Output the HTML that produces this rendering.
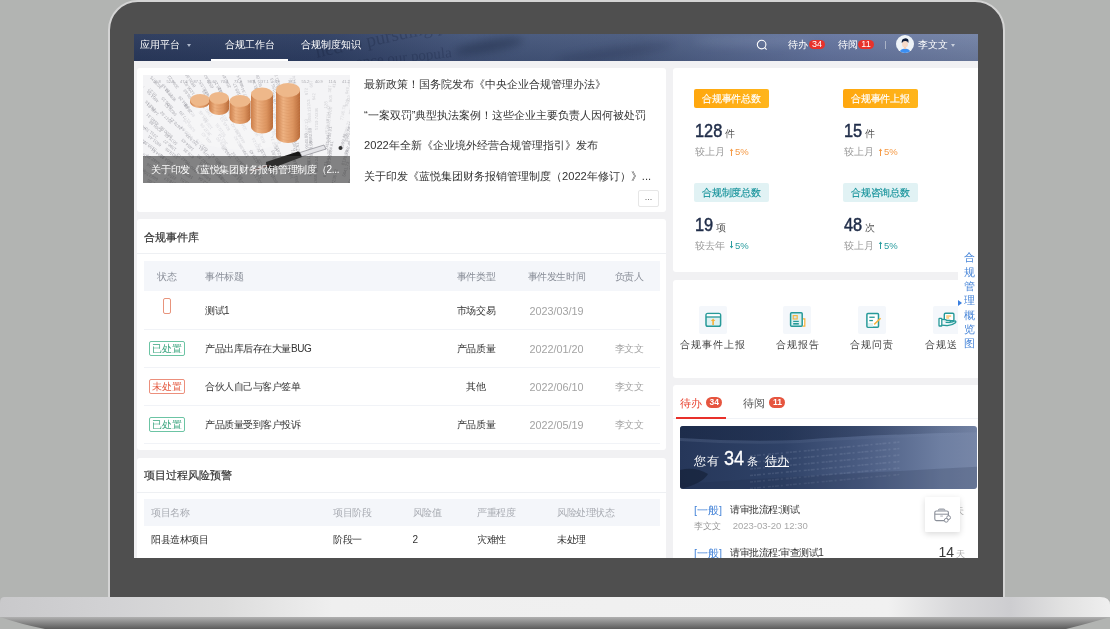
<!DOCTYPE html>
<html><head><meta charset="utf-8">
<style>
*{margin:0;padding:0;box-sizing:border-box}
html,body{width:1110px;height:629px;overflow:hidden;background:#b2b4b2;font-family:"Liberation Sans",sans-serif;}
.abs{position:absolute}
#bezel{position:absolute;left:108px;top:0;width:897px;height:640px;background:#4f4f4f;border:2px solid #d4d4d4;border-radius:30px;}
#screen{position:absolute;left:134px;top:34px;width:844px;height:524px;background:#f1f1f3;overflow:hidden;will-change:transform;}
#base{position:absolute;left:0;top:597px;width:1110px;height:32px;}
#nav{position:absolute;left:0;top:0;width:844px;height:27px;overflow:hidden;background:linear-gradient(90deg,#2b3a5c 0%,#2f3f63 22%,#44557a 40%,#4a5b7f 60%,#6676a0 82%,#7483a6 100%);color:#fff;font-size:10px;}
.nt{top:0.6px;line-height:20px;font-size:10px;color:#fff;white-space:nowrap}
.badge{height:9px;border-radius:5px;background:#e8322b;color:#fff;font-size:9px;line-height:9px;text-align:center}
.news{font-size:11.15px;line-height:20px;color:#333;white-space:nowrap}
.ttl{font-size:11px;line-height:20px;-webkit-text-stroke:0.2px #333;color:#333;white-space:nowrap}
.th{font-size:10px;letter-spacing:-0.45px;line-height:20px;color:#8a8f99;white-space:nowrap}
.th2{font-size:10px;letter-spacing:-0.45px;line-height:20px;color:#a9acb3;white-space:nowrap}
.td{font-size:10px;letter-spacing:-0.45px;line-height:20px;color:#333;white-space:nowrap}
.tag{width:36px;height:15px;border:1px solid;border-radius:2px;font-size:10px;line-height:13px;text-align:center;white-space:nowrap}
.stag{width:75px;height:19px;border-radius:2px;font-size:10px;letter-spacing:-0.35px;text-indent:-0.35px;line-height:19px;text-align:center;white-space:nowrap;-webkit-text-stroke:0.15px currentColor}
.num{font-size:19px;line-height:20px;color:#1f2c48;white-space:nowrap;-webkit-text-stroke:0.5px #1f2c48;transform:scaleX(.86);transform-origin:0 0}
.unit{font-size:10px;line-height:16px;color:#555;white-space:nowrap}
.cmp{font-size:10px;line-height:16px;color:#9a9a9a;white-space:nowrap}
.pct{font-size:9.5px;line-height:16px;white-space:nowrap}
.lab{font-size:10px;line-height:16px;color:#444;letter-spacing:1px;white-space:nowrap}
.tb{width:16px;height:11px;border-radius:6px;background:#e6553f;color:#fff;font-size:8.5px;line-height:11px;text-align:center;font-weight:bold}
.card{position:absolute;background:#fff;border-radius:3px;}
</style></head><body>
<div id="bezel"></div>
<div id="screen">
  <div id="nav">
    <div class="abs" style="left:0;top:0;width:844px;height:27px;background:linear-gradient(180deg,rgba(255,255,255,0.03) 0%,rgba(10,20,45,0.12) 100%)"></div>
    <div class="abs" style="left:320px;top:6px;width:70px;height:12px;border-radius:50%;background:rgba(15,25,50,.35);filter:blur(4px);transform:rotate(-10deg)"></div>
    <div class="abs" style="left:420px;top:14px;width:120px;height:10px;border-radius:50%;background:rgba(15,25,50,.22);filter:blur(5px);transform:rotate(-8deg)"></div>
    <div class="abs" style="left:560px;top:2px;width:120px;height:10px;border-radius:50%;background:rgba(200,210,230,.12);filter:blur(5px)"></div>
    <div class="abs" style="left:180px;top:-8px;font-family:'Liberation Serif',serif;font-size:19px;color:rgba(15,25,50,.24);transform:rotate(-12deg);white-space:nowrap">ned to pursuing po</div>
    <div class="abs" style="left:222px;top:15px;font-family:'Liberation Serif',serif;font-size:15px;color:rgba(15,25,50,.22);transform:rotate(-6deg);white-space:nowrap">ance our popula</div>
    <div class="abs nt" style="left:6px">应用平台</div>
    <div class="abs" style="left:53px;top:9.5px;width:0;height:0;border-left:2.5px solid transparent;border-right:2.5px solid transparent;border-top:3px solid #aeb8cc"></div>
    <div class="abs nt" style="left:91px">合规工作台</div>
    <div class="abs" style="left:77px;top:25px;width:77px;height:2px;background:#fff"></div>
    <div class="abs nt" style="left:167px">合规制度知识</div>
    <svg class="abs" style="left:622px;top:5px" width="12" height="12" viewBox="0 0 12 12"><circle cx="5.6" cy="5.6" r="4.3" fill="none" stroke="#fff" stroke-width="1.1"/><path d="M8.7 8.7 L10.6 10.6" stroke="#fff" stroke-width="1.1"/></svg>
    <div class="abs nt" style="left:654px">待办</div>
    <div class="abs badge" style="left:675px;top:6px;width:16px">34</div>
    <div class="abs nt" style="left:704px">待阅</div>
    <div class="abs badge" style="left:724px;top:6px;width:16px">11</div>
    <div class="abs" style="left:751px;top:7px;width:1px;height:8px;background:#aab3c6"></div>
    <svg class="abs" style="left:762px;top:1px" width="18" height="18" viewBox="0 0 18 18"><defs><clipPath id="av"><circle cx="9" cy="9" r="9"/></clipPath></defs><g clip-path="url(#av)"><rect width="18" height="18" fill="#eef3f8"/><path d="M3 18 Q4 14 9 13.6 Q14 14 15 18 Z" fill="#3b8ef2"/><rect x="8" y="11.5" width="2" height="2.5" fill="#f3cdb4"/><ellipse cx="9" cy="9" rx="3" ry="3.6" fill="#f7dac8"/><path d="M5.8 8.2 Q5.2 4 8.6 3.6 Q10.2 2.6 11.2 3.8 Q13 4.4 12.3 8 Q11.8 6 9.2 6.1 Q6.8 6 5.8 8.2 Z" fill="#0f1d3a"/></g></svg>
    <div class="abs nt" style="left:784px">李文文</div>
    <div class="abs" style="left:816.5px;top:9.5px;width:0;height:0;border-left:2.5px solid transparent;border-right:2.5px solid transparent;border-top:3px solid #c8cfdc"></div>
  </div>
  <div class="card" style="left:3px;top:34px;width:529px;height:144px">
    <div class="abs" style="left:6px;top:7px;width:207px;height:108px;overflow:hidden;background:#f4f4f6">
      <svg width="207" height="108" viewBox="0 0 207 108" style="position:absolute;left:0;top:0">
        <defs><linearGradient id="cg" x1="0" x2="1"><stop offset="0" stop-color="#cc7d48"/><stop offset="0.3" stop-color="#eeb282"/><stop offset="0.7" stop-color="#dd9560"/><stop offset="1" stop-color="#b86a38"/></linearGradient></defs>
        <g font-family="Liberation Sans"><text x="1.9" y="12.2" transform="rotate(-134 1.9 12.2)" font-size="4.3" fill="#7e7e86" opacity="0.62">7639.67</text><text x="19.2" y="12.3" transform="rotate(-131 19.2 12.3)" font-size="4.3" fill="#7e7e86" opacity="0.62">3035.75</text><text x="36.1" y="12.3" transform="rotate(-128 36.1 12.3)" font-size="4.3" fill="#7e7e86" opacity="0.62">3060.22</text><text x="52.9" y="10.9" transform="rotate(-124 52.9 10.9)" font-size="4.3" fill="#7e7e86" opacity="0.62">8835.98</text><text x="71.0" y="12.3" transform="rotate(-120 71.0 12.3)" font-size="4.3" fill="#7e7e86" opacity="0.62">6500.67</text><text x="88.1" y="12.3" transform="rotate(-116 88.1 12.3)" font-size="4.3" fill="#7e7e86" opacity="0.62">2590.89</text><text x="101.3" y="12.1" transform="rotate(-113 101.3 12.1)" font-size="4.3" fill="#7e7e86" opacity="0.62">985.14</text><text x="119.3" y="11.2" transform="rotate(-107 119.3 11.2)" font-size="4.3" fill="#7e7e86" opacity="0.62">502.69</text><text x="137.2" y="12.3" transform="rotate(-102 137.2 12.3)" font-size="4.3" fill="#7e7e86" opacity="0.62">3210.76</text><text x="153.6" y="11.4" transform="rotate(-97 153.6 11.4)" font-size="4.3" fill="#7e7e86" opacity="0.3">85.94</text><text x="169.7" y="12.5" transform="rotate(-92 169.7 12.5)" font-size="4.3" fill="#7e7e86" opacity="0.3">667</text><text x="192.2" y="13.0" transform="rotate(-84 192.2 13.0)" font-size="4.3" fill="#7e7e86" opacity="0.3">417</text><text x="207.7" y="12.0" transform="rotate(-80 207.7 12.0)" font-size="4.3" fill="#7e7e86" opacity="0.3">497</text><text x="-1.6" y="17.8" transform="rotate(-136 -1.6 17.8)" font-size="4.3" fill="#7e7e86" opacity="0.62">1776.47</text><text x="14.3" y="20.4" transform="rotate(-133 14.3 20.4)" font-size="4.3" fill="#7e7e86" opacity="0.62">18.37</text><text x="30.3" y="20.2" transform="rotate(-130 30.3 20.2)" font-size="4.3" fill="#7e7e86" opacity="0.62">7710.58</text><text x="51.9" y="18.7" transform="rotate(-126 51.9 18.7)" font-size="4.3" fill="#7e7e86" opacity="0.62">1206.82</text><text x="66.8" y="19.8" transform="rotate(-122 66.8 19.8)" font-size="4.3" fill="#7e7e86" opacity="0.62">4430.53</text><text x="80.5" y="18.5" transform="rotate(-119 80.5 18.5)" font-size="4.3" fill="#7e7e86" opacity="0.62">6728.25</text><text x="97.8" y="19.6" transform="rotate(-114 97.8 19.6)" font-size="4.3" fill="#7e7e86" opacity="0.62">189.17</text><text x="116.8" y="19.0" transform="rotate(-109 116.8 19.0)" font-size="4.3" fill="#7e7e86" opacity="0.62">9173.34</text><text x="133.7" y="18.1" transform="rotate(-104 133.7 18.1)" font-size="4.3" fill="#7e7e86" opacity="0.62">2155.63</text><text x="151.9" y="17.8" transform="rotate(-98 151.9 17.8)" font-size="4.3" fill="#7e7e86" opacity="0.3">6903.37</text><text x="165.0" y="20.1" transform="rotate(-93 165.0 20.1)" font-size="4.3" fill="#7e7e86" opacity="0.3">972</text><text x="188.0" y="17.6" transform="rotate(-86 188.0 17.6)" font-size="4.3" fill="#7e7e86" opacity="0.3">307</text><text x="205.0" y="19.3" transform="rotate(-80 205.0 19.3)" font-size="4.3" fill="#7e7e86" opacity="0.3">946</text><text x="-0.5" y="24.9" transform="rotate(-137 -0.5 24.9)" font-size="4.3" fill="#7e7e86" opacity="0.62">7244.43</text><text x="16.3" y="26.3" transform="rotate(-134 16.3 26.3)" font-size="4.3" fill="#7e7e86" opacity="0.62">4864.59</text><text x="33.6" y="24.8" transform="rotate(-131 33.6 24.8)" font-size="4.3" fill="#7e7e86" opacity="0.62">9557.91</text><text x="51.7" y="26.3" transform="rotate(-127 51.7 26.3)" font-size="4.3" fill="#7e7e86" opacity="0.62">6099.89</text><text x="69.9" y="27.4" transform="rotate(-123 69.9 27.4)" font-size="4.3" fill="#7e7e86" opacity="0.62">7935.83</text><text x="85.0" y="25.7" transform="rotate(-119 85.0 25.7)" font-size="4.3" fill="#7e7e86" opacity="0.62">2535.49</text><text x="106.7" y="27.0" transform="rotate(-113 106.7 27.0)" font-size="4.3" fill="#7e7e86" opacity="0.62">4097.34</text><text x="119.2" y="26.4" transform="rotate(-109 119.2 26.4)" font-size="4.3" fill="#7e7e86" opacity="0.62">9085.35</text><text x="139.3" y="25.7" transform="rotate(-102 139.3 25.7)" font-size="4.3" fill="#7e7e86" opacity="0.62">7915.87</text><text x="152.7" y="24.6" transform="rotate(-98 152.7 24.6)" font-size="4.3" fill="#7e7e86" opacity="0.3">1796.14</text><text x="172.3" y="25.3" transform="rotate(-91 172.3 25.3)" font-size="4.3" fill="#7e7e86" opacity="0.3">642</text><text x="188.7" y="27.2" transform="rotate(-85 188.7 27.2)" font-size="4.3" fill="#7e7e86" opacity="0.3">805</text><text x="206.3" y="27.3" transform="rotate(-79 206.3 27.3)" font-size="4.3" fill="#7e7e86" opacity="0.3">113</text><text x="-3.6" y="33.2" transform="rotate(-139 -3.6 33.2)" font-size="4.3" fill="#7e7e86" opacity="0.62">1224.45</text><text x="13.3" y="34.2" transform="rotate(-136 13.3 34.2)" font-size="4.3" fill="#7e7e86" opacity="0.62">281.18</text><text x="30.6" y="32.8" transform="rotate(-133 30.6 32.8)" font-size="4.3" fill="#7e7e86" opacity="0.62">1000.15</text><text x="47.1" y="32.6" transform="rotate(-129 47.1 32.6)" font-size="4.3" fill="#7e7e86" opacity="0.62">9384.26</text><text x="63.6" y="31.9" transform="rotate(-125 63.6 31.9)" font-size="4.3" fill="#7e7e86" opacity="0.62">7388.52</text><text x="83.9" y="33.6" transform="rotate(-120 83.9 33.6)" font-size="4.3" fill="#7e7e86" opacity="0.62">9585.27</text><text x="100.5" y="34.3" transform="rotate(-116 100.5 34.3)" font-size="4.3" fill="#7e7e86" opacity="0.62">7789.55</text><text x="118.2" y="34.4" transform="rotate(-110 118.2 34.4)" font-size="4.3" fill="#7e7e86" opacity="0.62">358.86</text><text x="134.8" y="32.9" transform="rotate(-104 134.8 32.9)" font-size="4.3" fill="#7e7e86" opacity="0.62">5106.50</text><text x="148.8" y="31.7" transform="rotate(-99 148.8 31.7)" font-size="4.3" fill="#7e7e86" opacity="0.62">7433.79</text><text x="167.2" y="31.6" transform="rotate(-93 167.2 31.6)" font-size="4.3" fill="#7e7e86" opacity="0.3">213</text><text x="184.1" y="33.6" transform="rotate(-87 184.1 33.6)" font-size="4.3" fill="#7e7e86" opacity="0.3">128</text><text x="204.7" y="31.6" transform="rotate(-79 204.7 31.6)" font-size="4.3" fill="#7e7e86" opacity="0.3">820</text><text x="-0.7" y="40.5" transform="rotate(-140 -0.7 40.5)" font-size="4.3" fill="#7e7e86" opacity="0.62">6222.84</text><text x="16.3" y="38.7" transform="rotate(-136 16.3 38.7)" font-size="4.3" fill="#7e7e86" opacity="0.62">1495.91</text><text x="33.9" y="39.3" transform="rotate(-133 33.9 39.3)" font-size="4.3" fill="#7e7e86" opacity="0.62">6829.52</text><text x="52.5" y="40.7" transform="rotate(-129 52.5 40.7)" font-size="4.3" fill="#7e7e86" opacity="0.62">9528.68</text><text x="69.8" y="41.0" transform="rotate(-125 69.8 41.0)" font-size="4.3" fill="#7e7e86" opacity="0.62">1382.76</text><text x="88.7" y="38.6" transform="rotate(-120 88.7 38.6)" font-size="4.3" fill="#7e7e86" opacity="0.62">9861.21</text><text x="104.1" y="39.2" transform="rotate(-115 104.1 39.2)" font-size="4.3" fill="#7e7e86" opacity="0.62">1859.73</text><text x="122.9" y="40.5" transform="rotate(-109 122.9 40.5)" font-size="4.3" fill="#7e7e86" opacity="0.62">7977.42</text><text x="140.6" y="39.6" transform="rotate(-103 140.6 39.6)" font-size="4.3" fill="#7e7e86" opacity="0.62">2356.96</text><text x="155.9" y="40.1" transform="rotate(-97 155.9 40.1)" font-size="4.3" fill="#7e7e86" opacity="0.3">5621.94</text><text x="174.8" y="40.0" transform="rotate(-90 174.8 40.0)" font-size="4.3" fill="#7e7e86" opacity="0.3">396</text><text x="188.6" y="39.3" transform="rotate(-85 188.6 39.3)" font-size="4.3" fill="#7e7e86" opacity="0.3">706</text><text x="208.5" y="39.7" transform="rotate(-77 208.5 39.7)" font-size="4.3" fill="#7e7e86" opacity="0.3">956</text><text x="-3.7" y="45.9" transform="rotate(-141 -3.7 45.9)" font-size="4.3" fill="#7e7e86" opacity="0.62">5756.15</text><text x="16.3" y="48.4" transform="rotate(-138 16.3 48.4)" font-size="4.3" fill="#7e7e86" opacity="0.62">4545.31</text><text x="29.7" y="46.9" transform="rotate(-135 29.7 46.9)" font-size="4.3" fill="#7e7e86" opacity="0.62">3517.62</text><text x="48.3" y="47.1" transform="rotate(-132 48.3 47.1)" font-size="4.3" fill="#7e7e86" opacity="0.62">5177.89</text><text x="65.7" y="45.7" transform="rotate(-127 65.7 45.7)" font-size="4.3" fill="#7e7e86" opacity="0.62">525.45</text><text x="85.2" y="45.6" transform="rotate(-122 85.2 45.6)" font-size="4.3" fill="#7e7e86" opacity="0.62">4615.83</text><text x="99.1" y="47.4" transform="rotate(-118 99.1 47.4)" font-size="4.3" fill="#7e7e86" opacity="0.62">9251.12</text><text x="117.8" y="46.7" transform="rotate(-112 117.8 46.7)" font-size="4.3" fill="#7e7e86" opacity="0.62">3121.13</text><text x="135.6" y="46.3" transform="rotate(-105 135.6 46.3)" font-size="4.3" fill="#7e7e86" opacity="0.62">2318.16</text><text x="153.9" y="45.8" transform="rotate(-98 153.9 45.8)" font-size="4.3" fill="#7e7e86" opacity="0.3">1796.90</text><text x="168.2" y="47.4" transform="rotate(-93 168.2 47.4)" font-size="4.3" fill="#7e7e86" opacity="0.3">6050.19</text><text x="186.1" y="46.1" transform="rotate(-86 186.1 46.1)" font-size="4.3" fill="#7e7e86" opacity="0.3">7794.42</text><text x="200.1" y="45.5" transform="rotate(-80 200.1 45.5)" font-size="4.3" fill="#7e7e86" opacity="0.3">7746.78</text><text x="3.5" y="53.0" transform="rotate(-141 3.5 53.0)" font-size="4.3" fill="#7e7e86" opacity="0.62">4472.54</text><text x="19.4" y="55.3" transform="rotate(-139 19.4 55.3)" font-size="4.3" fill="#7e7e86" opacity="0.62">8208.88</text><text x="39.2" y="53.0" transform="rotate(-135 39.2 53.0)" font-size="4.3" fill="#7e7e86" opacity="0.62">3678.21</text><text x="52.7" y="55.2" transform="rotate(-132 52.7 55.2)" font-size="4.3" fill="#7e7e86" opacity="0.62">6366.26</text><text x="69.9" y="53.1" transform="rotate(-128 69.9 53.1)" font-size="4.3" fill="#7e7e86" opacity="0.62">120.58</text><text x="87.5" y="54.5" transform="rotate(-123 87.5 54.5)" font-size="4.3" fill="#7e7e86" opacity="0.62">8245.53</text><text x="104.0" y="54.5" transform="rotate(-118 104.0 54.5)" font-size="4.3" fill="#7e7e86" opacity="0.62">3366.22</text><text x="122.5" y="55.0" transform="rotate(-111 122.5 55.0)" font-size="4.3" fill="#7e7e86" opacity="0.62">2033.37</text><text x="136.7" y="53.7" transform="rotate(-106 136.7 53.7)" font-size="4.3" fill="#7e7e86" opacity="0.62">1449.49</text><text x="155.4" y="54.9" transform="rotate(-98 155.4 54.9)" font-size="4.3" fill="#7e7e86" opacity="0.3">5259.43</text><text x="174.7" y="55.1" transform="rotate(-90 174.7 55.1)" font-size="4.3" fill="#7e7e86" opacity="0.3">5719.74</text><text x="186.7" y="53.8" transform="rotate(-85 186.7 53.8)" font-size="4.3" fill="#7e7e86" opacity="0.3">9026.63</text><text x="207.8" y="54.0" transform="rotate(-76 207.8 54.0)" font-size="4.3" fill="#7e7e86" opacity="0.3">475.37</text><text x="-0.1" y="59.7" transform="rotate(-143 -0.1 59.7)" font-size="4.3" fill="#7e7e86" opacity="0.62">585.32</text><text x="15.2" y="61.6" transform="rotate(-141 15.2 61.6)" font-size="4.3" fill="#7e7e86" opacity="0.62">2311.70</text><text x="29.9" y="61.0" transform="rotate(-138 29.9 61.0)" font-size="4.3" fill="#7e7e86" opacity="0.62">8500.96</text><text x="50.1" y="62.3" transform="rotate(-134 50.1 62.3)" font-size="4.3" fill="#7e7e86" opacity="0.62">8080.84</text><text x="68.7" y="59.8" transform="rotate(-129 68.7 59.8)" font-size="4.3" fill="#7e7e86" opacity="0.62">3637.66</text><text x="83.2" y="60.4" transform="rotate(-125 83.2 60.4)" font-size="4.3" fill="#7e7e86" opacity="0.62">9210.91</text><text x="98.0" y="61.0" transform="rotate(-121 98.0 61.0)" font-size="4.3" fill="#7e7e86" opacity="0.62">9184.42</text><text x="115.9" y="60.6" transform="rotate(-115 115.9 60.6)" font-size="4.3" fill="#7e7e86" opacity="0.62">9994.36</text><text x="132.8" y="59.9" transform="rotate(-108 132.8 59.9)" font-size="4.3" fill="#7e7e86" opacity="0.62">8934.77</text><text x="149.6" y="61.0" transform="rotate(-101 149.6 61.0)" font-size="4.3" fill="#7e7e86" opacity="0.62">6745.78</text><text x="165.7" y="59.5" transform="rotate(-94 165.7 59.5)" font-size="4.3" fill="#7e7e86" opacity="0.3">6187.13</text><text x="185.2" y="59.6" transform="rotate(-86 185.2 59.6)" font-size="4.3" fill="#7e7e86" opacity="0.3">6573.79</text><text x="203.8" y="61.2" transform="rotate(-77 203.8 61.2)" font-size="4.3" fill="#7e7e86" opacity="0.3">8055.21</text><text x="3.3" y="66.7" transform="rotate(-144 3.3 66.7)" font-size="4.3" fill="#7e7e86" opacity="0.62">8836.68</text><text x="18.7" y="69.4" transform="rotate(-142 18.7 69.4)" font-size="4.3" fill="#7e7e86" opacity="0.62">6631.44</text><text x="34.7" y="68.0" transform="rotate(-139 34.7 68.0)" font-size="4.3" fill="#7e7e86" opacity="0.62">5575.65</text><text x="55.6" y="69.3" transform="rotate(-135 55.6 69.3)" font-size="4.3" fill="#7e7e86" opacity="0.62">7817.77</text><text x="69.1" y="67.1" transform="rotate(-131 69.1 67.1)" font-size="4.3" fill="#7e7e86" opacity="0.62">491.43</text><text x="85.0" y="68.8" transform="rotate(-127 85.0 68.8)" font-size="4.3" fill="#7e7e86" opacity="0.62">383.14</text><text x="102.4" y="67.2" transform="rotate(-121 102.4 67.2)" font-size="4.3" fill="#7e7e86" opacity="0.62">4664.51</text><text x="122.5" y="67.2" transform="rotate(-113 122.5 67.2)" font-size="4.3" fill="#7e7e86" opacity="0.62">8182.23</text><text x="138.2" y="68.2" transform="rotate(-107 138.2 68.2)" font-size="4.3" fill="#7e7e86" opacity="0.62">8373.89</text><text x="153.7" y="67.1" transform="rotate(-100 153.7 67.1)" font-size="4.3" fill="#7e7e86" opacity="0.62">8699.65</text><text x="169.3" y="68.4" transform="rotate(-93 169.3 68.4)" font-size="4.3" fill="#7e7e86" opacity="0.62">8682.88</text><text x="187.2" y="67.1" transform="rotate(-84 187.2 67.1)" font-size="4.3" fill="#7e7e86" opacity="0.62">8759.91</text><text x="204.5" y="67.1" transform="rotate(-76 204.5 67.1)" font-size="4.3" fill="#7e7e86" opacity="0.62">8905.88</text><text x="-1.5" y="73.9" transform="rotate(-147 -1.5 73.9)" font-size="4.3" fill="#7e7e86" opacity="0.62">5705.33</text><text x="13.9" y="74.4" transform="rotate(-144 13.9 74.4)" font-size="4.3" fill="#7e7e86" opacity="0.62">3199.37</text><text x="33.7" y="74.1" transform="rotate(-141 33.7 74.1)" font-size="4.3" fill="#7e7e86" opacity="0.62">1596.27</text><text x="51.3" y="73.9" transform="rotate(-137 51.3 73.9)" font-size="4.3" fill="#7e7e86" opacity="0.62">1454.43</text><text x="65.3" y="74.8" transform="rotate(-134 65.3 74.8)" font-size="4.3" fill="#7e7e86" opacity="0.62">6917.79</text><text x="84.7" y="73.9" transform="rotate(-128 84.7 73.9)" font-size="4.3" fill="#7e7e86" opacity="0.62">6609.90</text><text x="101.1" y="73.6" transform="rotate(-122 101.1 73.6)" font-size="4.3" fill="#7e7e86" opacity="0.62">3302.82</text><text x="118.1" y="76.2" transform="rotate(-117 118.1 76.2)" font-size="4.3" fill="#7e7e86" opacity="0.62">5929.24</text><text x="135.2" y="75.4" transform="rotate(-109 135.2 75.4)" font-size="4.3" fill="#7e7e86" opacity="0.62">5637.74</text><text x="154.0" y="76.0" transform="rotate(-100 154.0 76.0)" font-size="4.3" fill="#7e7e86" opacity="0.62">1165.71</text><text x="165.6" y="73.6" transform="rotate(-95 165.6 73.6)" font-size="4.3" fill="#7e7e86" opacity="0.62">9048.88</text><text x="185.1" y="75.2" transform="rotate(-85 185.1 75.2)" font-size="4.3" fill="#7e7e86" opacity="0.62">2411.34</text><text x="200.1" y="74.1" transform="rotate(-78 200.1 74.1)" font-size="4.3" fill="#7e7e86" opacity="0.62">2599.46</text><text x="4.8" y="80.8" transform="rotate(-147 4.8 80.8)" font-size="4.3" fill="#7e7e86" opacity="0.62">1024.27</text><text x="21.9" y="81.9" transform="rotate(-145 21.9 81.9)" font-size="4.3" fill="#7e7e86" opacity="0.62">1594.51</text><text x="35.5" y="81.8" transform="rotate(-142 35.5 81.8)" font-size="4.3" fill="#7e7e86" opacity="0.62">5819.65</text><text x="51.5" y="81.6" transform="rotate(-139 51.5 81.6)" font-size="4.3" fill="#7e7e86" opacity="0.62">679.35</text><text x="68.3" y="81.9" transform="rotate(-135 68.3 81.9)" font-size="4.3" fill="#7e7e86" opacity="0.62">6075.61</text><text x="89.7" y="82.3" transform="rotate(-128 89.7 82.3)" font-size="4.3" fill="#7e7e86" opacity="0.62">1563.75</text><text x="106.0" y="81.5" transform="rotate(-122 106.0 81.5)" font-size="4.3" fill="#7e7e86" opacity="0.62">1399.90</text><text x="123.8" y="82.2" transform="rotate(-115 123.8 82.2)" font-size="4.3" fill="#7e7e86" opacity="0.62">3138.74</text><text x="138.7" y="81.5" transform="rotate(-108 138.7 81.5)" font-size="4.3" fill="#7e7e86" opacity="0.62">4241.45</text><text x="157.7" y="82.7" transform="rotate(-99 157.7 82.7)" font-size="4.3" fill="#7e7e86" opacity="0.62">2632.61</text><text x="170.0" y="81.5" transform="rotate(-93 170.0 81.5)" font-size="4.3" fill="#7e7e86" opacity="0.62">8838.98</text><text x="188.4" y="81.8" transform="rotate(-83 188.4 81.8)" font-size="4.3" fill="#7e7e86" opacity="0.62">2984.61</text><text x="204.4" y="81.1" transform="rotate(-75 204.4 81.1)" font-size="4.3" fill="#7e7e86" opacity="0.62">5608.48</text><text x="-2.2" y="87.5" transform="rotate(-150 -2.2 87.5)" font-size="4.3" fill="#7e7e86" opacity="0.62">5836.91</text><text x="17.4" y="87.6" transform="rotate(-147 17.4 87.6)" font-size="4.3" fill="#7e7e86" opacity="0.62">4482.95</text><text x="30.8" y="88.1" transform="rotate(-145 30.8 88.1)" font-size="4.3" fill="#7e7e86" opacity="0.62">6664.82</text><text x="47.1" y="87.7" transform="rotate(-141 47.1 87.7)" font-size="4.3" fill="#7e7e86" opacity="0.62">8442.73</text><text x="66.9" y="89.6" transform="rotate(-137 66.9 89.6)" font-size="4.3" fill="#7e7e86" opacity="0.62">6487.83</text><text x="80.1" y="89.3" transform="rotate(-133 80.1 89.3)" font-size="4.3" fill="#7e7e86" opacity="0.62">3893.42</text><text x="99.7" y="89.0" transform="rotate(-127 99.7 89.0)" font-size="4.3" fill="#7e7e86" opacity="0.62">3212.92</text><text x="116.3" y="87.8" transform="rotate(-120 116.3 87.8)" font-size="4.3" fill="#7e7e86" opacity="0.62">4120.45</text><text x="136.4" y="89.2" transform="rotate(-111 136.4 89.2)" font-size="4.3" fill="#7e7e86" opacity="0.62">8330.63</text><text x="153.8" y="89.2" transform="rotate(-102 153.8 89.2)" font-size="4.3" fill="#7e7e86" opacity="0.62">1642.91</text><text x="167.7" y="89.4" transform="rotate(-94 167.7 89.4)" font-size="4.3" fill="#7e7e86" opacity="0.62">9011.86</text><text x="186.0" y="90.4" transform="rotate(-84 186.0 90.4)" font-size="4.3" fill="#7e7e86" opacity="0.62">6341.30</text><text x="201.3" y="90.4" transform="rotate(-75 201.3 90.4)" font-size="4.3" fill="#7e7e86" opacity="0.62">8128.79</text><text x="2.9" y="94.7" transform="rotate(-151 2.9 94.7)" font-size="4.3" fill="#7e7e86" opacity="0.62">8112.63</text><text x="17.9" y="95.7" transform="rotate(-149 17.9 95.7)" font-size="4.3" fill="#7e7e86" opacity="0.62">5128.56</text><text x="36.4" y="95.9" transform="rotate(-146 36.4 95.9)" font-size="4.3" fill="#7e7e86" opacity="0.62">4429.81</text><text x="55.8" y="96.5" transform="rotate(-142 55.8 96.5)" font-size="4.3" fill="#7e7e86" opacity="0.62">4860.13</text><text x="67.3" y="95.2" transform="rotate(-139 67.3 95.2)" font-size="4.3" fill="#7e7e86" opacity="0.62">710.91</text><text x="85.1" y="96.8" transform="rotate(-134 85.1 96.8)" font-size="4.3" fill="#7e7e86" opacity="0.62">6399.16</text><text x="106.6" y="96.7" transform="rotate(-126 106.6 96.7)" font-size="4.3" fill="#7e7e86" opacity="0.62">831.84</text><text x="124.1" y="97.3" transform="rotate(-119 124.1 97.3)" font-size="4.3" fill="#7e7e86" opacity="0.62">1214.38</text><text x="137.8" y="95.9" transform="rotate(-112 137.8 95.9)" font-size="4.3" fill="#7e7e86" opacity="0.62">4002.15</text><text x="155.3" y="97.3" transform="rotate(-102 155.3 97.3)" font-size="4.3" fill="#7e7e86" opacity="0.62">7683.28</text><text x="175.1" y="97.0" transform="rotate(-90 175.1 97.0)" font-size="4.3" fill="#7e7e86" opacity="0.62">9899.24</text><text x="186.5" y="95.8" transform="rotate(-83 186.5 95.8)" font-size="4.3" fill="#7e7e86" opacity="0.62">1942.36</text><text x="208.4" y="95.6" transform="rotate(-71 208.4 95.6)" font-size="4.3" fill="#7e7e86" opacity="0.62">2545.25</text><text x="-2.8" y="101.9" transform="rotate(-154 -2.8 101.9)" font-size="4.3" fill="#7e7e86" opacity="0.62">6841.68</text><text x="15.6" y="103.4" transform="rotate(-151 15.6 103.4)" font-size="4.3" fill="#7e7e86" opacity="0.62">6883.56</text><text x="33.7" y="103.1" transform="rotate(-148 33.7 103.1)" font-size="4.3" fill="#7e7e86" opacity="0.62">2254.47</text><text x="50.4" y="102.2" transform="rotate(-145 50.4 102.2)" font-size="4.3" fill="#7e7e86" opacity="0.62">1875.74</text><text x="68.4" y="103.9" transform="rotate(-141 68.4 103.9)" font-size="4.3" fill="#7e7e86" opacity="0.62">5894.45</text><text x="81.6" y="103.6" transform="rotate(-137 81.6 103.6)" font-size="4.3" fill="#7e7e86" opacity="0.62">9265.99</text><text x="100.6" y="103.4" transform="rotate(-131 100.6 103.4)" font-size="4.3" fill="#7e7e86" opacity="0.62">3932.34</text><text x="119.7" y="103.0" transform="rotate(-122 119.7 103.0)" font-size="4.3" fill="#7e7e86" opacity="0.62">3220.97</text><text x="131.2" y="101.7" transform="rotate(-116 131.2 101.7)" font-size="4.3" fill="#7e7e86" opacity="0.62">4449.43</text><text x="150.6" y="103.4" transform="rotate(-106 150.6 103.4)" font-size="4.3" fill="#7e7e86" opacity="0.62">1688.38</text><text x="168.2" y="101.7" transform="rotate(-94 168.2 101.7)" font-size="4.3" fill="#7e7e86" opacity="0.62">1426.96</text><text x="183.0" y="102.2" transform="rotate(-85 183.0 102.2)" font-size="4.3" fill="#7e7e86" opacity="0.62">6124.71</text><text x="201.9" y="102.1" transform="rotate(-73 201.9 102.1)" font-size="4.3" fill="#7e7e86" opacity="0.62">5641.73</text><text x="3.7" y="111.0" transform="rotate(-155 3.7 111.0)" font-size="4.3" fill="#7e7e86" opacity="0.62">1228.25</text><text x="18.9" y="111.0" transform="rotate(-153 18.9 111.0)" font-size="4.3" fill="#7e7e86" opacity="0.62">3502.66</text><text x="35.7" y="109.3" transform="rotate(-150 35.7 109.3)" font-size="4.3" fill="#7e7e86" opacity="0.62">2478.57</text><text x="51.1" y="111.0" transform="rotate(-147 51.1 111.0)" font-size="4.3" fill="#7e7e86" opacity="0.62">9785.51</text><text x="68.9" y="110.8" transform="rotate(-143 68.9 110.8)" font-size="4.3" fill="#7e7e86" opacity="0.62">3022.64</text><text x="88.1" y="110.2" transform="rotate(-137 88.1 110.2)" font-size="4.3" fill="#7e7e86" opacity="0.62">7579.51</text><text x="101.7" y="108.7" transform="rotate(-132 101.7 108.7)" font-size="4.3" fill="#7e7e86" opacity="0.62">9254.82</text><text x="121.1" y="110.6" transform="rotate(-124 121.1 110.6)" font-size="4.3" fill="#7e7e86" opacity="0.62">4906.11</text><text x="135.7" y="109.1" transform="rotate(-116 135.7 109.1)" font-size="4.3" fill="#7e7e86" opacity="0.62">9901.20</text><text x="156.4" y="110.0" transform="rotate(-103 156.4 110.0)" font-size="4.3" fill="#7e7e86" opacity="0.62">5383.46</text><text x="174.5" y="109.2" transform="rotate(-90 174.5 109.2)" font-size="4.3" fill="#7e7e86" opacity="0.62">5368.56</text><text x="191.6" y="109.5" transform="rotate(-78 191.6 109.5)" font-size="4.3" fill="#7e7e86" opacity="0.62">7235.82</text><text x="206.8" y="111.2" transform="rotate(-68 206.8 111.2)" font-size="4.3" fill="#7e7e86" opacity="0.62">4584.66</text><text x="10.0" y="8.0" font-size="4" fill="#8a8a92" opacity="0.7">40.8</text><text x="23.5" y="7.8" font-size="4" fill="#8a8a92" opacity="0.7">52.9</text><text x="37.0" y="7.7" font-size="4" fill="#8a8a92" opacity="0.7">47.6</text><text x="50.5" y="7.5" font-size="4" fill="#8a8a92" opacity="0.7">87.7</text><text x="64.0" y="8.1" font-size="4" fill="#8a8a92" opacity="0.7">25.6</text><text x="77.5" y="8.3" font-size="4" fill="#8a8a92" opacity="0.7">70.3</text><text x="91.0" y="8.3" font-size="4" fill="#8a8a92" opacity="0.7">73.3</text><text x="104.5" y="7.7" font-size="4" fill="#8a8a92" opacity="0.7">98.8</text><text x="118.0" y="8.4" font-size="4" fill="#8a8a92" opacity="0.7">37.1</text><text x="131.5" y="7.7" font-size="4" fill="#8a8a92" opacity="0.7">8.9</text><text x="145.0" y="7.7" font-size="4" fill="#8a8a92" opacity="0.7">38.1</text><text x="158.5" y="8.2" font-size="4" fill="#8a8a92" opacity="0.7">55.2</text><text x="172.0" y="8.1" font-size="4" fill="#8a8a92" opacity="0.7">40.9</text><text x="185.5" y="7.6" font-size="4" fill="#8a8a92" opacity="0.7">11.5</text><text x="199.0" y="8.2" font-size="4" fill="#8a8a92" opacity="0.7">41.2</text></g>
        <ellipse cx="100" cy="50" rx="60" ry="25" fill="#f6f6f8" opacity="0.6"/>
        <rect x="47" y="25" width="20" height="2" fill="url(#cg)"/><ellipse cx="57" cy="27" rx="10" ry="6" fill="url(#cg)"/><ellipse cx="57" cy="25" rx="10" ry="6" fill="#eeb88a"/><rect x="66" y="23" width="20" height="11" fill="url(#cg)"/><ellipse cx="76" cy="34" rx="10" ry="6" fill="url(#cg)"/><path d="M66 26 Q76 35.6 86 26" stroke="#d08a5c" stroke-width="0.5" fill="none" opacity="0.5"/><path d="M66 29 Q76 38.6 86 29" stroke="#d08a5c" stroke-width="0.5" fill="none" opacity="0.5"/><path d="M66 32 Q76 41.6 86 32" stroke="#d08a5c" stroke-width="0.5" fill="none" opacity="0.5"/><ellipse cx="76" cy="23" rx="10" ry="6" fill="#eeb88a"/><rect x="86.5" y="26" width="21.0" height="17" fill="url(#cg)"/><ellipse cx="97" cy="43" rx="10.5" ry="6" fill="url(#cg)"/><path d="M86.5 29 Q97 38.6 107.5 29" stroke="#d08a5c" stroke-width="0.5" fill="none" opacity="0.5"/><path d="M86.5 32 Q97 41.6 107.5 32" stroke="#d08a5c" stroke-width="0.5" fill="none" opacity="0.5"/><path d="M86.5 35 Q97 44.6 107.5 35" stroke="#d08a5c" stroke-width="0.5" fill="none" opacity="0.5"/><path d="M86.5 38 Q97 47.6 107.5 38" stroke="#d08a5c" stroke-width="0.5" fill="none" opacity="0.5"/><path d="M86.5 41 Q97 50.6 107.5 41" stroke="#d08a5c" stroke-width="0.5" fill="none" opacity="0.5"/><ellipse cx="97" cy="26" rx="10.5" ry="6" fill="#eeb88a"/><rect x="108" y="19" width="22" height="33" fill="url(#cg)"/><ellipse cx="119" cy="52" rx="11" ry="6.5" fill="url(#cg)"/><path d="M108 22 Q119 32.4 130 22" stroke="#d08a5c" stroke-width="0.5" fill="none" opacity="0.5"/><path d="M108 25 Q119 35.4 130 25" stroke="#d08a5c" stroke-width="0.5" fill="none" opacity="0.5"/><path d="M108 28 Q119 38.4 130 28" stroke="#d08a5c" stroke-width="0.5" fill="none" opacity="0.5"/><path d="M108 31 Q119 41.4 130 31" stroke="#d08a5c" stroke-width="0.5" fill="none" opacity="0.5"/><path d="M108 34 Q119 44.4 130 34" stroke="#d08a5c" stroke-width="0.5" fill="none" opacity="0.5"/><path d="M108 37 Q119 47.4 130 37" stroke="#d08a5c" stroke-width="0.5" fill="none" opacity="0.5"/><path d="M108 40 Q119 50.4 130 40" stroke="#d08a5c" stroke-width="0.5" fill="none" opacity="0.5"/><path d="M108 43 Q119 53.4 130 43" stroke="#d08a5c" stroke-width="0.5" fill="none" opacity="0.5"/><path d="M108 46 Q119 56.4 130 46" stroke="#d08a5c" stroke-width="0.5" fill="none" opacity="0.5"/><path d="M108 49 Q119 59.4 130 49" stroke="#d08a5c" stroke-width="0.5" fill="none" opacity="0.5"/><ellipse cx="119" cy="19" rx="11" ry="6.5" fill="#eeb88a"/><rect x="133" y="15" width="24" height="46" fill="url(#cg)"/><ellipse cx="145" cy="61" rx="12" ry="7" fill="url(#cg)"/><path d="M133 18 Q145 29.200000000000003 157 18" stroke="#d08a5c" stroke-width="0.5" fill="none" opacity="0.5"/><path d="M133 21 Q145 32.2 157 21" stroke="#d08a5c" stroke-width="0.5" fill="none" opacity="0.5"/><path d="M133 24 Q145 35.2 157 24" stroke="#d08a5c" stroke-width="0.5" fill="none" opacity="0.5"/><path d="M133 27 Q145 38.2 157 27" stroke="#d08a5c" stroke-width="0.5" fill="none" opacity="0.5"/><path d="M133 30 Q145 41.2 157 30" stroke="#d08a5c" stroke-width="0.5" fill="none" opacity="0.5"/><path d="M133 33 Q145 44.2 157 33" stroke="#d08a5c" stroke-width="0.5" fill="none" opacity="0.5"/><path d="M133 36 Q145 47.2 157 36" stroke="#d08a5c" stroke-width="0.5" fill="none" opacity="0.5"/><path d="M133 39 Q145 50.2 157 39" stroke="#d08a5c" stroke-width="0.5" fill="none" opacity="0.5"/><path d="M133 42 Q145 53.2 157 42" stroke="#d08a5c" stroke-width="0.5" fill="none" opacity="0.5"/><path d="M133 45 Q145 56.2 157 45" stroke="#d08a5c" stroke-width="0.5" fill="none" opacity="0.5"/><path d="M133 48 Q145 59.2 157 48" stroke="#d08a5c" stroke-width="0.5" fill="none" opacity="0.5"/><path d="M133 51 Q145 62.2 157 51" stroke="#d08a5c" stroke-width="0.5" fill="none" opacity="0.5"/><path d="M133 54 Q145 65.2 157 54" stroke="#d08a5c" stroke-width="0.5" fill="none" opacity="0.5"/><path d="M133 57 Q145 68.2 157 57" stroke="#d08a5c" stroke-width="0.5" fill="none" opacity="0.5"/><path d="M133 60 Q145 71.2 157 60" stroke="#d08a5c" stroke-width="0.5" fill="none" opacity="0.5"/><ellipse cx="145" cy="15" rx="12" ry="7" fill="#eeb88a"/>
        <path d="M123 87 L155 76.5 Q158 77 159 82 L127 94 Q123 93 123 87 Z" fill="#161616"/>
        <path d="M157 77.5 L181 70 L183 74 L159 81.5 Z" fill="#e4e4e8" stroke="#8a8a90" stroke-width="0.7"/><path d="M108 96 L126 90" stroke="#c84a3a" stroke-width="0.6"/>
        <circle cx="197.5" cy="73" r="2" fill="#333"/>
      </svg>
      <div class="abs" style="left:0;top:81px;width:207px;height:27px;background:rgba(60,60,60,.62)"></div>
      <div class="abs" style="left:8px;top:81px;line-height:27px;font-size:10px;letter-spacing:-0.25px;color:#fff;white-space:nowrap">关于印发《蓝悦集团财务报销管理制度（2...</div>
    </div>
    <div class="abs news" style="left:227px;top:6px">最新政策！国务院发布《中央企业合规管理办法》</div>
    <div class="abs news" style="left:227px;top:36.5px">“一案双罚”典型执法案例！这些企业主要负责人因何被处罚</div>
    <div class="abs news" style="left:227px;top:67px">2022年全新《企业境外经营合规管理指引》发布</div>
    <div class="abs news" style="left:227px;top:97.5px">关于印发《蓝悦集团财务报销管理制度（2022年修订）》...</div>
    <div class="abs" style="left:501px;top:122px;width:21px;height:17px;border:1px solid #e6e6e6;border-radius:2px;color:#666;font-size:9px;line-height:12px;text-align:center">...</div>
  </div>
  <div class="card" style="left:3px;top:185px;width:529px;height:231px">
    <div class="abs ttl" style="left:7px;top:7.5px">合规事件库</div>
    <div class="abs" style="left:0;top:34px;width:529px;height:1px;background:#eef0f3"></div>
    <div class="abs" style="left:6.5px;top:42px;width:516px;height:30px;background:#f4f6fa"></div>
    <div class="abs th" style="left:0;width:60px;top:47.5px;text-align:center">状态</div>
    <div class="abs th" style="left:68px;top:47.5px">事件标题</div>
    <div class="abs th" style="left:299px;width:80px;top:47.5px;text-align:center">事件类型</div>
    <div class="abs th" style="left:369.5px;width:100px;top:47.5px;text-align:center">事件发生时间</div>
    <div class="abs th" style="left:452px;width:80px;top:47.5px;text-align:center">负责人</div>
    <div class="abs" style="left:26px;top:79px;width:8px;height:16px;border:1px solid #e8947c;border-radius:2px"></div><div class="abs td" style="left:68px;top:82px">测试1</div><div class="abs td" style="left:299px;width:80px;top:82px;text-align:center">市场交易</div><div class="abs td" style="left:369.5px;width:100px;top:82px;text-align:center;color:#a3a3a3;font-size:10.8px;letter-spacing:0">2023/03/19</div><div class="abs td" style="left:452px;width:80px;top:82px;text-align:center;color:#a3a3a3"></div><div class="abs" style="left:6.5px;top:110px;width:516px;height:1px;background:#f1f3f7"></div><div class="abs tag" style="left:12px;top:121.5px;border-color:#6cc4a4;color:#3aa57f">已处置</div><div class="abs td" style="left:68px;top:120px">产品出库后存在大量BUG</div><div class="abs td" style="left:299px;width:80px;top:120px;text-align:center">产品质量</div><div class="abs td" style="left:369.5px;width:100px;top:120px;text-align:center;color:#a3a3a3;font-size:10.8px;letter-spacing:0">2022/01/20</div><div class="abs td" style="left:452px;width:80px;top:120px;text-align:center;color:#a3a3a3">李文文</div><div class="abs" style="left:6.5px;top:148px;width:516px;height:1px;background:#f1f3f7"></div><div class="abs tag" style="left:12px;top:159.5px;border-color:#ec8f7c;color:#e4593f">未处置</div><div class="abs td" style="left:68px;top:158px">合伙人自己与客户签单</div><div class="abs td" style="left:299px;width:80px;top:158px;text-align:center">其他</div><div class="abs td" style="left:369.5px;width:100px;top:158px;text-align:center;color:#a3a3a3;font-size:10.8px;letter-spacing:0">2022/06/10</div><div class="abs td" style="left:452px;width:80px;top:158px;text-align:center;color:#a3a3a3">李文文</div><div class="abs" style="left:6.5px;top:186px;width:516px;height:1px;background:#f1f3f7"></div><div class="abs tag" style="left:12px;top:197.5px;border-color:#6cc4a4;color:#3aa57f">已处置</div><div class="abs td" style="left:68px;top:196px">产品质量受到客户投诉</div><div class="abs td" style="left:299px;width:80px;top:196px;text-align:center">产品质量</div><div class="abs td" style="left:369.5px;width:100px;top:196px;text-align:center;color:#a3a3a3;font-size:10.8px;letter-spacing:0">2022/05/19</div><div class="abs td" style="left:452px;width:80px;top:196px;text-align:center;color:#a3a3a3">李文文</div><div class="abs" style="left:6.5px;top:224px;width:516px;height:1px;background:#f1f3f7"></div>
  </div>
  <div class="card" style="left:3px;top:424px;width:529px;height:120px">
    <div class="abs ttl" style="left:7px;top:7px">项目过程风险预警</div>
    <div class="abs" style="left:0;top:33.5px;width:529px;height:1px;background:#eef0f3"></div>
    <div class="abs" style="left:6.5px;top:41px;width:516px;height:27px;background:#f4f6fa"></div>
    <div class="abs th2" style="left:14px;top:45px">项目名称</div>
    <div class="abs th2" style="left:196px;top:45px">项目阶段</div>
    <div class="abs th2" style="left:275.6px;top:45px">风险值</div>
    <div class="abs th2" style="left:340px;top:45px">严重程度</div>
    <div class="abs th2" style="left:420px;top:45px">风险处理状态</div>
    <div class="abs td" style="left:14px;top:71.7px">阳县造林项目</div>
    <div class="abs td" style="left:196px;top:71.7px">阶段一</div>
    <div class="abs td" style="left:275.6px;top:71.7px">2</div>
    <div class="abs td" style="left:340px;top:71.7px">灾难性</div>
    <div class="abs td" style="left:420px;top:71.7px">未处理</div>
  </div>
  <div class="card" style="left:539px;top:34px;width:320px;height:204px"><div class="abs stag" style="left:21px;top:21px;background:linear-gradient(90deg,#ffa70e,#ffb51b);color:#fff">合规事件总数</div>
    <div class="abs num" style="left:22px;top:53px">128</div>
    <div class="abs unit" style="left:52px;top:58.3px">件</div>
    <div class="abs cmp" style="left:22px;top:76px">较上月</div>
    <div class="abs pct" style="left:56px;top:76px;color:#f59a45"><svg width="5" height="8" viewBox="0 0 5 8" style="vertical-align:-0.5px;margin-right:1px"><path d="M2.5 0.5 L4.2 3 H3 V8 H2 V3 H0.8 Z" fill="currentColor"/></svg>5%</div><div class="abs stag" style="left:170px;top:21px;background:linear-gradient(90deg,#ffa70e,#ffb51b);color:#fff">合规事件上报</div>
    <div class="abs num" style="left:171px;top:53px">15</div>
    <div class="abs unit" style="left:192px;top:58.3px">件</div>
    <div class="abs cmp" style="left:171px;top:76px">较上月</div>
    <div class="abs pct" style="left:205px;top:76px;color:#f59a45"><svg width="5" height="8" viewBox="0 0 5 8" style="vertical-align:-0.5px;margin-right:1px"><path d="M2.5 0.5 L4.2 3 H3 V8 H2 V3 H0.8 Z" fill="currentColor"/></svg>5%</div><div class="abs stag" style="left:21px;top:114.5px;background:#e1f2f4;color:#17939b">合规制度总数</div>
    <div class="abs num" style="left:22px;top:146.5px">19</div>
    <div class="abs unit" style="left:43px;top:151.8px">项</div>
    <div class="abs cmp" style="left:22px;top:169.5px">较去年</div>
    <div class="abs pct" style="left:56px;top:169.5px;color:#2a9d9f"><svg width="5" height="8" viewBox="0 0 5 8" style="vertical-align:-0.5px;margin-right:1px"><path d="M2.5 7.5 L4.2 5 H3 V0 H2 V5 H0.8 Z" fill="currentColor"/></svg>5%</div><div class="abs stag" style="left:170px;top:114.5px;background:#e1f2f4;color:#17939b">合规咨询总数</div>
    <div class="abs num" style="left:171px;top:146.5px">48</div>
    <div class="abs unit" style="left:192px;top:151.8px">次</div>
    <div class="abs cmp" style="left:171px;top:169.5px">较上月</div>
    <div class="abs pct" style="left:205px;top:169.5px;color:#2a9d9f"><svg width="5" height="8" viewBox="0 0 5 8" style="vertical-align:-0.5px;margin-right:1px"><path d="M2.5 0.5 L4.2 3 H3 V8 H2 V3 H0.8 Z" fill="currentColor"/></svg>5%</div></div>
  <div class="card" style="left:539px;top:246px;width:320px;height:98px"><div class="abs" style="left:25.5px;top:26px;width:28px;height:28px;background:#f4f7fb;border-radius:2px"><svg width="28" height="28" viewBox="0 0 28 28"><rect x="7" y="7.5" width="14.6" height="12.7" rx="1.8" fill="#dcf1f2" stroke="#279a99" stroke-width="1.5"/><rect x="7.8" y="8.2" width="13" height="2.6" fill="#fff"/><line x1="7" y1="11" x2="21.6" y2="11" stroke="#279a99" stroke-width="1.3"/><path d="M14.1 12.6 L16.3 15 H14.9 V19 H13.3 V15 H11.9 Z" fill="#f7b23b"/></svg></div><div class="abs lab" style="left:7.0px;top:57px">合规事件上报</div><div class="abs" style="left:110.3px;top:26px;width:28px;height:28px;background:#f4f7fb;border-radius:2px"><svg width="28" height="28" viewBox="0 0 28 28"><path d="M19.5 12.8 H21.8 V20.2 H19.5" fill="#fff" stroke="#f7b23b" stroke-width="1.2"/><rect x="7.6" y="6.7" width="11.6" height="13.6" rx="1" fill="#dcf1f2" stroke="#279a99" stroke-width="1.5"/><rect x="10.2" y="9.6" width="4" height="3.4" fill="#cfe9f2" stroke="#f7b23b" stroke-width="1.1"/><rect x="10.2" y="14.8" width="5.6" height="1.2" fill="#279a99"/><rect x="10.2" y="17" width="5.6" height="1.6" fill="#279a99"/></svg></div><div class="abs lab" style="left:102.8px;top:57px">合规报告</div><div class="abs" style="left:184.5px;top:26px;width:28px;height:28px;background:#f4f7fb;border-radius:2px"><svg width="28" height="28" viewBox="0 0 28 28"><rect x="8.9" y="7.6" width="11.6" height="13.6" rx="1" fill="#fff" stroke="#279a99" stroke-width="1.5"/><rect x="10" y="17" width="5" height="3.6" fill="#dcf1f2"/><rect x="11.3" y="10.6" width="5.4" height="1.3" fill="#279a99"/><rect x="11.3" y="13.9" width="3.6" height="1.3" fill="#279a99"/><line x1="16.2" y1="18.4" x2="22.6" y2="12.2" stroke="#f7b23b" stroke-width="1.5"/></svg></div><div class="abs lab" style="left:177.0px;top:57px">合规问责</div><div class="abs" style="left:259.5px;top:26px;width:28px;height:28px;background:#f4f7fb;border-radius:2px"><svg width="28" height="28" viewBox="0 0 28 28"><rect x="11.3" y="7.2" width="9.6" height="7.6" rx="1.2" fill="#fff" stroke="#279a99" stroke-width="1.4"/><rect x="13.2" y="9.5" width="5" height="1.1" fill="#f7b23b"/><rect x="13.2" y="11.4" width="3" height="1.1" fill="#f7b23b"/><rect x="6" y="12.4" width="2.8" height="7.6" rx="0.6" fill="#fff" stroke="#279a99" stroke-width="1.3"/><path d="M8.8 13.6 Q12 13 14 14.4 H17 Q18 15.6 16.6 16.4 H12.6 M16.6 16.4 Q19.5 16.3 22 14.8 Q23.5 15.4 22.4 16.8 Q18.5 20 13.5 19.6 L8.8 19.2" fill="#dcf1f2" stroke="#279a99" stroke-width="1.3"/></svg></div><div class="abs lab" style="left:252.0px;top:57px">合规送</div></div>
  <div class="card" style="left:539px;top:351px;width:320px;height:200px">
    <div class="abs" style="left:6.9px;top:7.6px;font-size:11px;line-height:20px;color:#e8412f;white-space:nowrap">待办</div>
    <div class="abs tb" style="left:33.3px;top:12.2px">34</div>
    <div class="abs" style="left:70.2px;top:7.6px;font-size:11px;line-height:20px;color:#555;white-space:nowrap">待阅</div>
    <div class="abs tb" style="left:96.4px;top:12.2px">11</div>
    <div class="abs" style="left:0;top:32.5px;width:320px;height:1.5px;background:#f0f2f6"></div>
    <div class="abs" style="left:3.4px;top:32px;width:49.3px;height:2px;background:#e8302a"></div>
    <div class="abs" style="left:7px;top:41px;width:297px;height:63px;border-radius:3px;overflow:hidden;background:linear-gradient(90deg,#26375a 0%,#2f4267 35%,#4b5d83 62%,#6e7fa2 88%,#7786a7 100%)">
      <svg class="abs" style="left:0;top:0" width="313" height="63" viewBox="0 0 313 63">
        <defs><linearGradient id="fold" x1="0" x2="1"><stop offset="0" stop-color="#1a2845" stop-opacity=".7"/><stop offset=".6" stop-color="#1a2845" stop-opacity=".35"/><stop offset="1" stop-color="#1a2845" stop-opacity="0"/></linearGradient>
        <linearGradient id="hl" x1="0" x2="1"><stop offset="0" stop-color="#8a9ab8" stop-opacity=".18"/><stop offset="1" stop-color="#8a9ab8" stop-opacity="0"/></linearGradient></defs>
        <path d="M0 0 H313 V6 Q200 8 120 14 Q60 16 0 12 Z" fill="url(#fold)"/>
        <path d="M0 12 Q60 16 120 14 Q200 8 313 6 V9 Q200 11 120 17 Q60 19 0 15 Z" fill="url(#hl)"/>
        <line x1="70" y1="30.0" x2="220" y2="16.0" stroke="#c8d2e6" stroke-width="1.6" stroke-dasharray="3 1 2 1 4 2 2 3" opacity="0.13"/><line x1="70" y1="36.5" x2="220" y2="22.5" stroke="#c8d2e6" stroke-width="1.6" stroke-dasharray="3 1 2 1 4 2 2 3" opacity="0.13"/><line x1="70" y1="43.0" x2="220" y2="29.0" stroke="#c8d2e6" stroke-width="1.6" stroke-dasharray="3 1 2 1 4 2 2 3" opacity="0.13"/><line x1="70" y1="49.5" x2="220" y2="35.5" stroke="#c8d2e6" stroke-width="1.6" stroke-dasharray="3 1 2 1 4 2 2 3" opacity="0.13"/><line x1="70" y1="56.0" x2="220" y2="42.0" stroke="#c8d2e6" stroke-width="1.6" stroke-dasharray="3 1 2 1 4 2 2 3" opacity="0.13"/><line x1="70" y1="62.5" x2="220" y2="48.5" stroke="#c8d2e6" stroke-width="1.6" stroke-dasharray="3 1 2 1 4 2 2 3" opacity="0.13"/>
        <path d="M0 44 Q15 40 28 48 Q22 58 0 63 Z" fill="#111b30" opacity=".55"/>
        <path d="M0 58 Q120 50 313 40 V63 H0 Z" fill="#1a2845" opacity=".18"/>
      </svg>
      <div class="abs" style="left:14px;top:25px;font-size:11.5px;line-height:20px;color:#fff;white-space:nowrap;letter-spacing:1px">您有</div>
      <div class="abs" style="left:44px;top:20px;font-size:21px;line-height:24px;color:#fff;white-space:nowrap;-webkit-text-stroke:0.3px #fff;transform:scaleX(.86);transform-origin:0 0">34</div>
      <div class="abs" style="left:67px;top:25px;font-size:11px;line-height:20px;color:#fff;white-space:nowrap">条</div>
      <div class="abs" style="left:85px;top:25px;font-size:11.5px;line-height:20px;color:#fff;white-space:nowrap;text-decoration:underline">待办</div>
    </div>
    <div class="abs" style="left:21px;top:114.6px;font-size:11px;line-height:20px;color:#4a87d9;white-space:nowrap">[一般]</div>
    <div class="abs td" style="left:57px;top:114.6px">请审批流程:测试</div>
    <div class="abs" style="left:21px;top:133.2px;font-size:9px;line-height:16px;color:#9a9a9a;white-space:nowrap">李文文</div>
    <div class="abs" style="left:59.7px;top:133.2px;font-size:9.5px;line-height:16px;color:#a8a8a8;white-space:nowrap">2023-03-20 12:30</div>
    <div class="abs" style="left:281.5px;top:118px;font-size:9px;line-height:16px;color:#aaa">天</div>
    <div class="abs" style="left:21px;top:157.5px;font-size:11px;line-height:20px;color:#4a87d9;white-space:nowrap">[一般]</div>
    <div class="abs td" style="left:57px;top:157.5px">请审批流程:审查测试1</div>
    <div class="abs" style="left:265.5px;top:157px;font-size:14px;line-height:20px;color:#3a3a3a;white-space:nowrap">14</div>
    <div class="abs" style="left:283px;top:161px;font-size:9px;line-height:16px;color:#aaa">天</div>
  </div>
  <div class="abs" style="left:791.4px;top:462.8px;width:35px;height:35px;background:#fff;border-radius:1px;box-shadow:0 2px 6px rgba(0,0,0,.15)">
    <svg width="35" height="35" viewBox="0 0 35 35"><path d="M13.2 13.5 Q13.2 12 14.6 12 H18.6 Q20 12 20 13.5" fill="#c9ccd2" stroke="#8a8f99" stroke-width="0.9"/><rect x="9.8" y="14" width="13.6" height="9.6" rx="1.6" fill="#fff" stroke="#8a8f99" stroke-width="1.1"/><line x1="9.8" y1="17.2" x2="23.4" y2="17.2" stroke="#8a8f99" stroke-width="1"/><rect x="15.3" y="18.6" width="2.6" height="0.9" fill="#a0a4ad"/><circle cx="23.6" cy="20.6" r="1.9" fill="#fff" stroke="#8a8f99" stroke-width="1"/><circle cx="21.2" cy="23.3" r="1.9" fill="#fff" stroke="#8a8f99" stroke-width="1"/></svg>
  </div>
<div class="abs" style="left:824px;top:206px;width:20px;height:137px;background:#fff"></div>
  <div class="abs" style="left:824px;top:266px;width:0;height:0;border-top:3.5px solid transparent;border-bottom:3.5px solid transparent;border-left:4px solid #3a7fe0"></div>
  <div class="abs" style="left:830px;top:216.2px;width:11px;font-size:11px;line-height:14.37px;color:#4a87d9;word-break:break-all">合规管理概览图</div>

</div>
<svg id="base" width="1110" height="32" viewBox="0 0 1110 32">
<defs>
<linearGradient id="bl" x1="0" x2="1" y1="0" y2="0">
<stop offset="0" stop-color="#c9c9cb"/><stop offset="0.1" stop-color="#d2d2d4"/><stop offset="0.2" stop-color="#dcdcdc"/><stop offset="0.3" stop-color="#efefef"/><stop offset="0.8" stop-color="#f1f1f1"/><stop offset="0.86" stop-color="#d8d8da"/><stop offset="0.91" stop-color="#cdcdd0"/><stop offset="0.96" stop-color="#e2e2e2"/><stop offset="1" stop-color="#efefef"/>
</linearGradient>
<linearGradient id="bd" x1="0" x2="0" y1="0" y2="1">
<stop offset="0" stop-color="#b0b0b0"/><stop offset="1" stop-color="#5c5c5c"/>
</linearGradient>
</defs>
<path d="M4 0 H1100 Q1110 0 1110 8 V20 H0 V6 Q0 0 4 0 Z" fill="url(#bl)"/>
<path d="M0 20 H1110 Q1090 26 1066 32 H45 Q20 27 0 20 Z" fill="url(#bd)"/>
</svg>
</body></html>
